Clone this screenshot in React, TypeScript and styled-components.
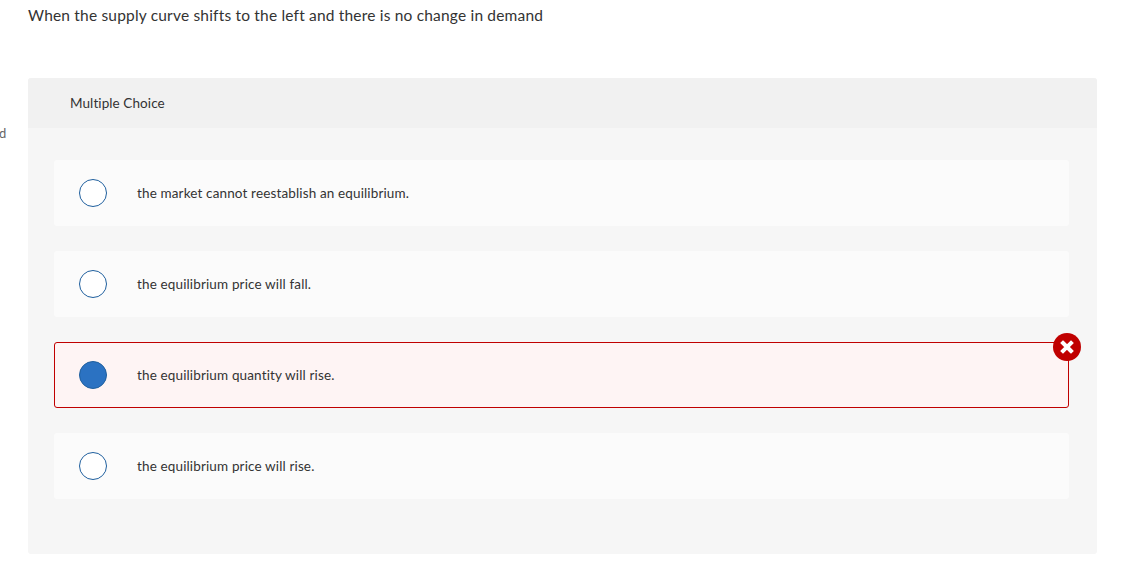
import React from "react";
import styled, { createGlobalStyle } from "styled-components";

const Global = createGlobalStyle`
  html, body { margin: 0; padding: 0; background: #fff; }
  body { font-family: "Lato", "Open Sans", sans-serif; color: #333; }
`;

const Page = styled.div`
  display: flex;
  width: 1143px;
  height: 563px;
  overflow: hidden;
`;

const SideRail = styled.div`
  flex: 0 0 28px;
  width: 28px;
  padding-top: 124px;
  overflow: hidden;
  box-sizing: border-box;
`;

const SideText = styled.div`
  font-size: 13px;
  line-height: 18px;
  color: #666;
  margin-left: -1px;
`;

const Main = styled.main`
  flex: 0 0 1069px;
  width: 1069px;
  display: flex;
  flex-direction: column;
`;

const Question = styled.h1`
  margin: 0;
  height: 78px;
  padding-top: 5px;
  box-sizing: border-box;
  font-size: 15.5px;
  line-height: 20px;
  font-weight: 400;
  color: #333;
  letter-spacing: 0.185px;
`;

const Card = styled.section`
  height: 476px;
  background: #f6f6f6;
  border-radius: 3px;
`;

const CardHeader = styled.div`
  height: 50px;
  display: flex;
  align-items: center;
  padding-left: 42px;
  background: #f1f1f1;
  border-radius: 3px 3px 0 0;
  font-size: 13.5px;
  letter-spacing: 0.09px;
  color: #333;
`;

const Options = styled.div`
  display: flex;
  flex-direction: column;
  gap: 25px;
  padding: 32px 28px 0 26px;
`;

const Option = styled.div<{ $wrong?: boolean }>`
  position: relative;
  height: 66px;
  box-sizing: border-box;
  display: flex;
  align-items: center;
  padding-left: ${(p) => (p.$wrong ? "24px" : "25px")};
  gap: 30px;
  background: ${(p) => (p.$wrong ? "#fef4f4" : "#fbfbfb")};
  border: ${(p) => (p.$wrong ? "1px solid #c00000" : "none")};
  border-radius: 3px;
`;

const Radio = styled.span<{ $checked?: boolean }>`
  flex: 0 0 28px;
  width: 28px;
  height: 28px;
  box-sizing: border-box;
  border-radius: 50%;
  border: 1px solid #1f5f9e;
  background: ${(p) => (p.$checked ? "#2b72c2" : "#fff")};
`;

const Label = styled.span`
  font-size: 13.5px;
  letter-spacing: 0.14px;
  color: #333;
`;

const Badge = styled.span`
  position: absolute;
  top: -10px;
  right: -13px;
  width: 28px;
  height: 28px;
  display: block;
`;

const WrongIcon = () => (
  <svg width="28" height="28" viewBox="0 0 28 28">
    <circle cx="14" cy="14" r="14" fill="#c00000" />
    <path d="M10 10 L18 18 M18 10 L10 18" stroke="#fff" strokeWidth="4" strokeLinecap="square" />
  </svg>
);

const items = [
  { text: "the market cannot reestablish an equilibrium." },
  { text: "the equilibrium price will fall." },
  { text: "the equilibrium quantity will rise.", wrong: true },
  { text: "the equilibrium price will rise." },
];

export default function App() {
  return (
    <Page>
      <Global />
      <SideRail>
        <SideText>d</SideText>
      </SideRail>
      <Main>
        <Question>When the supply curve shifts to the left and there is no change in demand</Question>
        <Card>
          <CardHeader>Multiple Choice</CardHeader>
          <Options>
            {items.map((item) => (
              <Option key={item.text} $wrong={item.wrong}>
                <Radio $checked={item.wrong} />
                <Label>{item.text}</Label>
                {item.wrong && (
                  <Badge>
                    <WrongIcon />
                  </Badge>
                )}
              </Option>
            ))}
          </Options>
        </Card>
      </Main>
    </Page>
  );
}
